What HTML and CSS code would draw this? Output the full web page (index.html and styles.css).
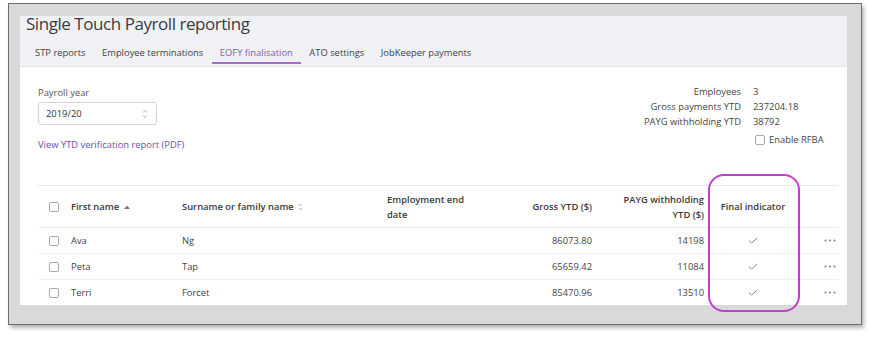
FILE: index.html
```html
<!DOCTYPE html>
<html lang="en">
<head>
<meta charset="utf-8">
<title>Single Touch Payroll reporting</title>
<link rel="stylesheet" href="styles.css">
</head>
<body>
<div class="frame">
  <div class="panel">
    <header class="head">
      <h1 class="title">Single Touch Payroll reporting</h1>
      <nav class="tabs">
        <span class="tab">STP reports</span>
        <span class="tab">Employee terminations</span>
        <span class="tab active">EOFY finalisation</span>
        <span class="tab">ATO settings</span>
        <span class="tab">JobKeeper payments</span>
      </nav>
    </header>
    <main class="content">
      <section class="top">
        <div class="left">
          <div class="label">Payroll year</div>
          <div class="select">
            <span>2019/20</span>
            <svg class="stepper" width="6" height="10" viewBox="0 0 6 10"><path d="M1 3.5 L3 1.5 L5 3.5 M1 6.5 L3 8.5 L5 6.5" fill="none" stroke="#b5b5b5" stroke-width="1"/></svg>
          </div>
          <a class="link">View YTD verification report (PDF)</a>
        </div>
        <div class="right">
          <span class="k">Employees</span><span class="v">3</span>
          <span class="k">Gross payments YTD</span><span class="v">237204.18</span>
          <span class="k">PAYG withholding YTD</span><span class="v">38792</span>
          <span class="k"></span><label class="v rfba"><span class="cb"></span>Enable RFBA</label>
        </div>
      </section>
      <div class="table">
        <div class="row hrow">
          <div class="c"><span class="cb"></span></div>
          <div class="c">First name<svg class="sort" width="6" height="4" viewBox="0 0 6 4"><path d="M0 4 L3 0.5 L6 4 Z" fill="#777"/></svg></div>
          <div class="c">Surname or family name<svg class="sort2" width="5" height="8" viewBox="0 0 5 8"><path d="M0.5 3 L2.5 0.5 L4.5 3 Z M0.5 5 L2.5 7.5 L4.5 5 Z" fill="#cfcfcf"/></svg></div>
          <div class="c"><span class="wrap">Employment end date</span></div>
          <div class="c num">Gross YTD ($)</div>
          <div class="c num"><span class="wrap">PAYG withholding YTD ($)</span></div>
          <div class="c mid">Final indicator</div>
          <div class="c"></div>
        </div>
        <div class="row">
          <div class="c"><span class="cb"></span></div>
          <div class="c">Ava</div>
          <div class="c">Ng</div>
          <div class="c"></div>
          <div class="c num">86073.80</div>
          <div class="c num">14198</div>
          <div class="c mid"><svg width="10" height="7" viewBox="0 0 10 7"><path d="M0.8 3.6 L3.6 6 L9.2 1" fill="none" stroke="#888" stroke-width="1"/></svg></div>
          <div class="c end"><svg width="12" height="3" viewBox="0 0 12 3"><circle cx="1.5" cy="1.5" r="1.1" fill="#888"/><circle cx="6" cy="1.5" r="1.1" fill="#888"/><circle cx="10.5" cy="1.5" r="1.1" fill="#888"/></svg></div>
        </div>
        <div class="row">
          <div class="c"><span class="cb"></span></div>
          <div class="c">Peta</div>
          <div class="c">Tap</div>
          <div class="c"></div>
          <div class="c num">65659.42</div>
          <div class="c num">11084</div>
          <div class="c mid"><svg width="10" height="7" viewBox="0 0 10 7"><path d="M0.8 3.6 L3.6 6 L9.2 1" fill="none" stroke="#888" stroke-width="1"/></svg></div>
          <div class="c end"><svg width="12" height="3" viewBox="0 0 12 3"><circle cx="1.5" cy="1.5" r="1.1" fill="#888"/><circle cx="6" cy="1.5" r="1.1" fill="#888"/><circle cx="10.5" cy="1.5" r="1.1" fill="#888"/></svg></div>
        </div>
        <div class="row last">
          <div class="c"><span class="cb"></span></div>
          <div class="c">Terri</div>
          <div class="c">Forcet</div>
          <div class="c"></div>
          <div class="c num">85470.96</div>
          <div class="c num">13510</div>
          <div class="c mid"><svg width="10" height="7" viewBox="0 0 10 7"><path d="M0.8 3.6 L3.6 6 L9.2 1" fill="none" stroke="#888" stroke-width="1"/></svg></div>
          <div class="c end"><svg width="12" height="3" viewBox="0 0 12 3"><circle cx="1.5" cy="1.5" r="1.1" fill="#888"/><circle cx="6" cy="1.5" r="1.1" fill="#888"/><circle cx="10.5" cy="1.5" r="1.1" fill="#888"/></svg></div>
        </div>
      </div>
    </main>
  </div>
</div>
<div class="annot"></div>
</body>
</html>
```
FILE: styles.css
```css
* { box-sizing: border-box; }
html, body { margin: 0; padding: 0; background: #ffffff; }
body {
  font-family: "Open Sans", "Noto Sans", sans-serif;
  font-size: 9.4px;
  color: #444;
  width: 873px;
  height: 340px;
  overflow: hidden;
}
.frame {
  margin: 3px 0 0 8px;
  width: 854px;
  height: 322px;
  border: 1px solid #6f6f6f;
  background: #d9d9d9;
  padding: 12px 14px 0 11px;
  box-shadow: 2px 3px 4px rgba(0,0,0,0.3);
}
.panel {
  height: 289px;
  background: #ffffff;
  display: flex;
  flex-direction: column;
}
.head {
  background: #eff1f4;
  height: 66px;
  border-bottom: 1px solid #e2e5e9;
}
.title {
  margin: 0;
  padding-left: 6px;
  font-size: 17px;
  font-weight: 400;
  letter-spacing: -0.45px;
  line-height: 16px;
  color: #3c3c3c;
}
.tabs {
  display: flex;
  margin-top: 14px;
  padding-left: 7px;
}
.tab {
  padding: 0 8px 2px;
  line-height: 14px;
  border-bottom: 2px solid transparent;
  color: #444;
}
.tab + .tab { margin-left: 0.5px; }
.tab.active {
  color: #7b5fae;
  border-bottom-color: #a46ad0;
}
.content {
  flex: 1;
  display: flex;
  flex-direction: column;
  padding: 19px 9px 0 18px;
}
.top {
  display: flex;
  justify-content: space-between;
  height: 99px;
  padding-right: 13px;
}
.label { line-height: 14px; color: #555; }
.select {
  margin-top: 2px;
  width: 119px;
  height: 23px;
  border: 1px solid #d4d4d4;
  border-radius: 3px;
  display: flex;
  align-items: center;
  justify-content: space-between;
  padding: 0 8px 0 7px;
  color: #333;
}
.link {
  display: block;
  margin-top: 13px;
  line-height: 14px;
  color: #6c4fa6;
}
.right {
  display: grid;
  grid-template-columns: auto 72px;
  column-gap: 12px;
  align-content: start;
  margin-top: -2px;
  line-height: 15px;
}
.k { text-align: right; color: #444; }
.v { color: #444; }
.rfba {
  display: flex;
  align-items: center;
  gap: 4px;
  margin-top: 4px;
  padding-left: 2px;
  line-height: 14px;
}
.cb {
  display: inline-block;
  width: 10px;
  height: 10px;
  border: 1px solid #a9a9a9;
  border-radius: 2px;
  background: #fff;
}
.table {
  border-top: 1px solid #e8e8e8;
  width: 800px;
}
.row {
  display: grid;
  grid-template-columns: 33px 111px 205px 105px 100px 112px 98px 36px;
  height: 26px;
  border-bottom: 1px solid #efefef;
  align-items: center;
}
.row.last { border-bottom: none; height: 25px; }
.hrow {
  height: 42px;
  font-weight: 600;
  color: #3a3a3a;
  line-height: 15px;
}
.c { display: flex; align-items: center; }
.c:first-child { padding-left: 11px; }
.num { justify-content: flex-end; text-align: right; }
.mid { justify-content: center; }
.end { justify-content: flex-end; padding-right: 2px; }
.wrap { display: block; max-width: 85px; }
.sort { margin-left: 5px; }
.sort2 { margin-left: 4px; }
.annot {
  position: absolute;
  left: 708px;
  top: 174px;
  width: 92px;
  height: 138px;
  border: 2.5px solid #c13fcd;
  border-radius: 16px;
}
```
